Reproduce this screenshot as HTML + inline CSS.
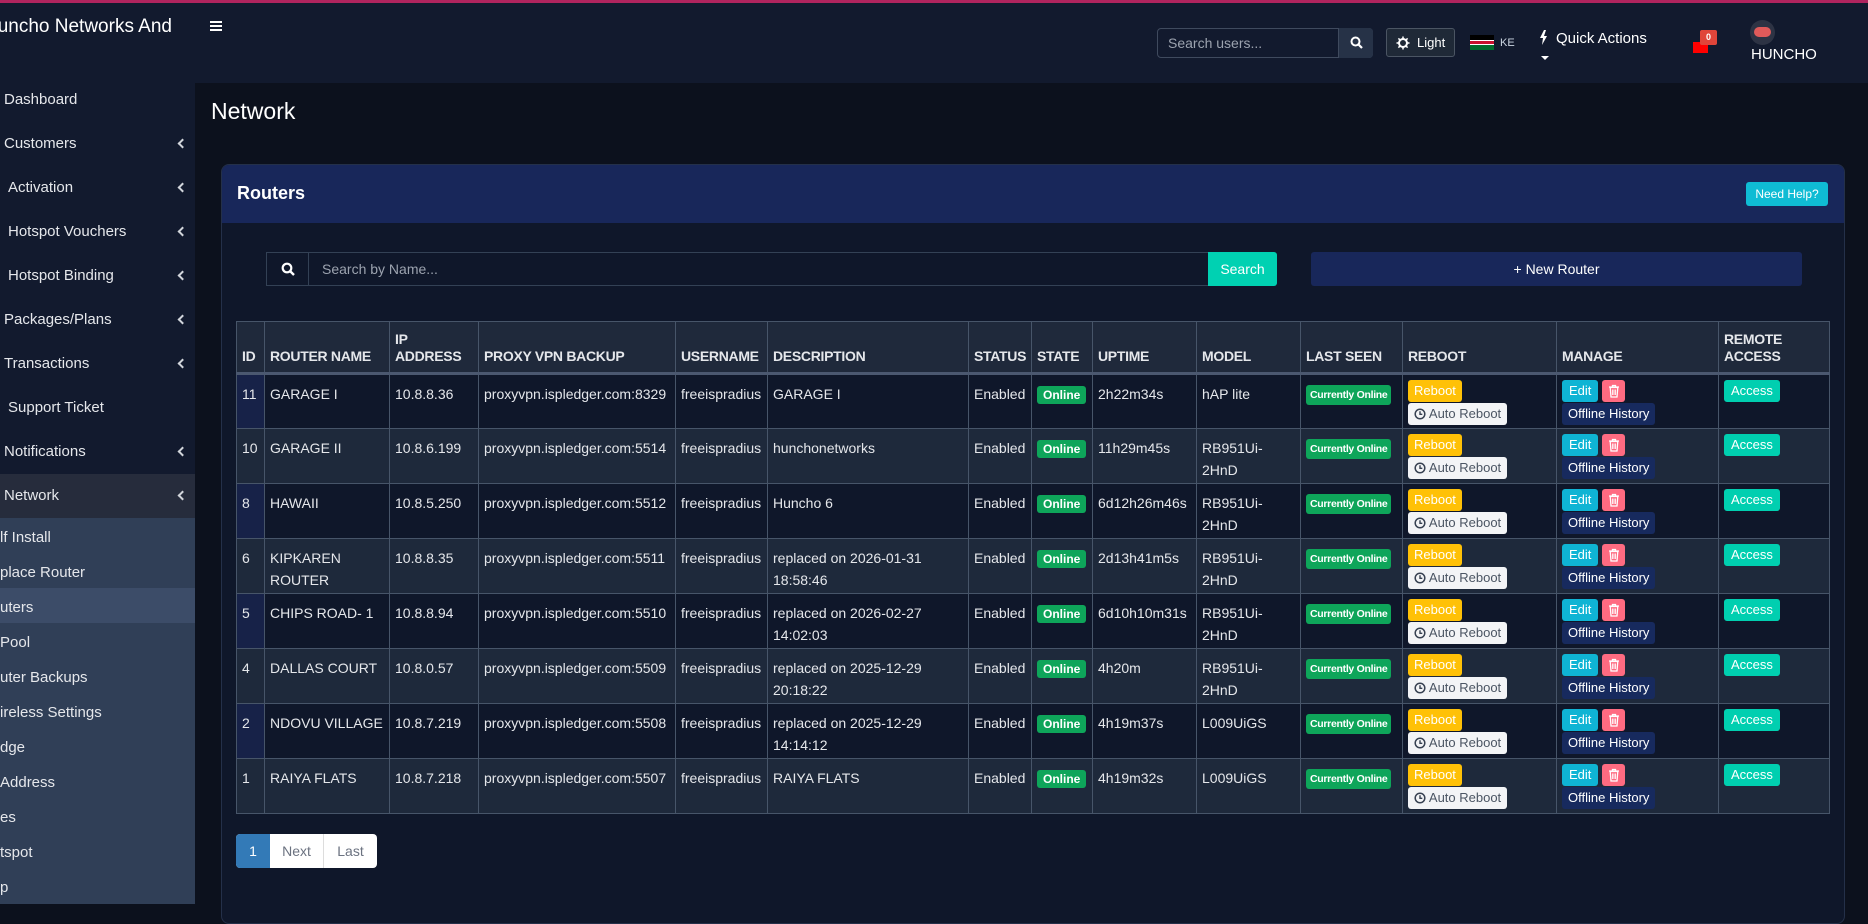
<!DOCTYPE html>
<html><head><meta charset="utf-8"><style>
*{box-sizing:border-box;margin:0;padding:0}
body{width:1868px;height:904px;overflow:hidden;background:#0c111d;font-family:"Liberation Sans",sans-serif;color:#e5e7eb;position:relative}
.abs{position:absolute}
#top{left:0;top:0;width:1868px;height:3px;background:#b0245e}
#hdr{left:0;top:3px;width:1868px;height:80px;background:#121a2e}
#side{left:0;top:83px;width:195px;height:821px;background:#121a2e}
.si{position:absolute;left:4px;font-size:15px;color:#e5e7eb}
.chev{position:absolute;left:179px;width:7px;height:7px;border-left:2px solid #d1d5db;border-bottom:2px solid #d1d5db;transform:rotate(45deg)}
.sub{position:absolute;left:0;font-size:15px;color:#e5e7eb}
#card{left:221px;top:164px;width:1624px;height:760px;background:#0f172a;border:1px solid #243049;border-radius:8px;overflow:hidden}
#ch{left:0;top:0;width:100%;height:58px;background:#18275a}
table{position:absolute;left:236px;top:321px;border-collapse:collapse;table-layout:fixed;width:1593px}
th,td{border:1px solid #475569;text-align:left;vertical-align:top;padding:8px 5px 0 5px;font-size:14px;line-height:22px;color:#e5e7eb;white-space:nowrap;overflow:hidden}
th{vertical-align:bottom;font-size:14px;font-weight:bold;padding:0 5px 7px 5px;line-height:17px;background:#1f293b;height:52px;border-bottom:3px solid #4b5870;letter-spacing:-0.3px}
tbody tr{height:55px}
tbody tr:nth-child(odd) td{background:#0f172a}
tbody tr:nth-child(even) td{background:#1e293b}
tbody tr:nth-child(odd) td:first-child{background:#172248}
.b{display:inline-block;border-radius:3px;font-size:12px;line-height:18px;padding:0 6px;color:#fff;white-space:nowrap;vertical-align:top}
.on{background:#0ea55a;font-weight:bold;font-size:12px;margin-top:3px}
.co{background:#0ea55a;font-weight:bold;font-size:10.5px;line-height:20px;padding:0 4px;margin-top:2px;letter-spacing:-0.3px}
.rb{background:#ffc107;color:#fff;font-size:13px;line-height:22px;padding:0 6px}
.ar{background:#f3f4f6;color:#4b5563;font-size:13px;line-height:22px;padding:0 6px;margin-top:1px}
.ed{background:#0fb4d4;font-size:13px;line-height:22px;padding:0 7px}
.dl{background:#ff6b81;width:23px;height:22px;position:relative}
.oh{background:#172a5e;font-size:13px;line-height:22px;padding:0 6px;margin-top:1px}
.ac{background:#00cfb0;font-size:13px;line-height:22px;padding:0 7px}
td.act{padding-top:5px;line-height:0}
</style></head><body>
<div id="top" class="abs"></div>
<div id="hdr" class="abs">
 <div class="abs" style="left:-16px;top:13px;font-size:19px;color:#fff">Huncho Networks And</div>
 <div class="abs" style="left:210px;top:18px;width:12px">
  <div style="height:2px;background:#fff;margin-bottom:2px"></div><div style="height:2px;background:#fff;margin-bottom:2px"></div><div style="height:2px;background:#fff"></div></div>
 <div class="abs" style="left:1157px;top:25px;width:216px;height:30px;border:1px solid #3f4a5e;border-radius:4px;background:#121a2e">
  <div class="abs" style="left:10px;top:6px;font-size:14px;color:#9ca3af">Search users...</div>
  <div class="abs" style="left:180px;top:-1px;width:35px;height:30px;background:#263247;border-left:1px solid #3f4a5e;border-radius:0 4px 4px 0">
   <svg class="abs" style="left:11px;top:8px" width="13" height="13" viewBox="0 0 13 13"><circle cx="5.5" cy="5.5" r="4" fill="none" stroke="#fff" stroke-width="2"/><path d="M8.5 8.5L12 12" stroke="#fff" stroke-width="2.2"/></svg></div>
 </div>
 <div class="abs" style="left:1386px;top:25px;width:69px;height:29px;border:1px solid #4b5563;border-radius:3px;background:#1f2937">
  <svg class="abs" style="left:9px;top:7px" width="14" height="14" viewBox="0 0 14 14"><circle cx="7" cy="7" r="4" fill="none" stroke="#fff" stroke-width="2"/><g stroke="#fff" stroke-width="1.5"><path d="M7 0.5V2.5M7 11.5V13.5M0.5 7H2.5M11.5 7H13.5M2.4 2.4L3.8 3.8M10.2 10.2L11.6 11.6M2.4 11.6L3.8 10.2M10.2 3.8L11.6 2.4"/></g></svg>
  <div class="abs" style="left:30px;top:6px;font-size:13px;color:#fff">Light</div></div>
 <div class="abs" style="left:1470px;top:32px;width:24px;height:15px">
  <div style="height:5px;background:#000"></div><div style="height:5px;background:#c8102e;border-top:1px solid #fff;border-bottom:1px solid #fff"></div><div style="height:5px;background:#006b2d"></div></div>
 <div class="abs" style="left:1500px;top:34px;font-size:11px;color:#cbd5e1">KE</div>
 <svg class="abs" style="left:1539px;top:27px" width="9" height="15" viewBox="0 0 9 15"><path d="M5 0L1 8H4L3 15L8 6H5L7 0Z" fill="#fff"/></svg>
 <div class="abs" style="left:1556px;top:27px;font-size:15px;color:#fff">Quick Actions</div>
 <div class="abs" style="left:1541px;top:53px;width:0;height:0;border-left:4px solid transparent;border-right:4px solid transparent;border-top:4px solid #fff"></div>
 <div class="abs" style="left:1693px;top:39px;width:15px;height:11px;background:#ff0000"></div>
 <div class="abs" style="left:1700px;top:27px;width:17px;height:15px;background:#e0453a;border-radius:2px;font-size:9px;color:#fff;text-align:center;line-height:15px;font-weight:bold">0</div>
 <div class="abs" style="left:1750px;top:17px;width:25px;height:25px;border-radius:50%;background:#2d3344"><div style="position:absolute;left:4px;top:7px;width:17px;height:10px;border-radius:5px;background:#e05a5a"></div></div>
 <div class="abs" style="left:1751px;top:43px;font-size:15px;color:#fff">HUNCHO</div>
</div>
<div id="side" class="abs">
 <div class="si" style="top:8px">Dashboard</div>
 <div class="si" style="top:52px">Customers</div><div class="chev" style="top:57px"></div>
 <div class="si" style="top:96px;left:8px">Activation</div><div class="chev" style="top:101px"></div>
 <div class="si" style="top:140px;left:8px">Hotspot Vouchers</div><div class="chev" style="top:145px"></div>
 <div class="si" style="top:184px;left:8px">Hotspot Binding</div><div class="chev" style="top:189px"></div>
 <div class="si" style="top:228px">Packages/Plans</div><div class="chev" style="top:233px"></div>
 <div class="si" style="top:272px">Transactions</div><div class="chev" style="top:277px"></div>
 <div class="si" style="top:316px;left:8px">Support Ticket</div>
 <div class="si" style="top:360px">Notifications</div><div class="chev" style="top:365px"></div>
 <div class="abs" style="left:0;top:391px;width:195px;height:44px;background:#262c3c"></div>
 <div class="si" style="top:404px">Network</div><div class="chev" style="top:409px"></div>
 <div class="abs" style="left:0;top:435px;width:195px;height:386px;background:#303f57"></div>
 <div class="abs" style="left:0;top:505px;width:195px;height:35px;background:#3c4c68"></div>
 <div class="sub" style="top:446px">lf Install</div>
 <div class="sub" style="top:481px">place Router</div>
 <div class="sub" style="top:516px">uters</div>
 <div class="sub" style="top:551px">Pool</div>
 <div class="sub" style="top:586px">uter Backups</div>
 <div class="sub" style="top:621px">ireless Settings</div>
 <div class="sub" style="top:656px">dge</div>
 <div class="sub" style="top:691px">Address</div>
 <div class="sub" style="top:726px">es</div>
 <div class="sub" style="top:761px">tspot</div>
 <div class="sub" style="top:796px">p</div>
</div>
<div class="abs" style="left:211px;top:98px;font-size:23px;color:#fff">Network</div>
<div id="card" class="abs">
 <div id="ch" class="abs">
  <div class="abs" style="left:15px;top:18px;font-size:18px;font-weight:bold;color:#fff">Routers</div>
  <div class="abs" style="left:1524px;top:17px;width:82px;height:24px;background:#0fbcd4;border-radius:3px;font-size:12px;color:#fff;text-align:center;line-height:24px">Need Help?</div>
 </div>
 <div class="abs" style="left:44px;top:87px;width:953px;height:34px;border:1px solid #334155;background:#0f172a">
  <div class="abs" style="left:0;top:0;width:42px;height:32px;border-right:1px solid #334155">
   <svg class="abs" style="left:14px;top:9px" width="14" height="14" viewBox="0 0 14 14"><circle cx="6" cy="6" r="4.3" fill="none" stroke="#fff" stroke-width="2.2"/><path d="M9 9L13 13" stroke="#fff" stroke-width="2.4"/></svg></div>
  <div class="abs" style="left:55px;top:8px;font-size:14px;color:#9ca3af">Search by Name...</div>
 </div>
 <div class="abs" style="left:986px;top:87px;width:69px;height:34px;background:#00d1b2;border-radius:0 3px 3px 0;color:#fff;font-size:14px;text-align:center;line-height:34px">Search</div>
 <div class="abs" style="left:1089px;top:87px;width:491px;height:34px;background:#18275a;border-radius:3px;color:#fff;font-size:14px;text-align:center;line-height:34px">+ New Router</div>
</div>
<svg width="0" height="0" style="position:absolute"><defs>
<symbol id="clk" viewBox="0 0 12 12"><circle cx="6" cy="6" r="4.8" fill="none" stroke="#374151" stroke-width="1.5"/><path d="M6 3.2V6.3H8.3" fill="none" stroke="#374151" stroke-width="1.4"/></symbol>
<symbol id="trs" viewBox="0 0 12 14"><path d="M1 3H11M4.5 3V1.5H7.5V3M2.2 3.5L3 13H9L9.8 3.5Z" fill="none" stroke="#fff" stroke-width="1.3"/><path d="M4.6 5.5V11M6 5.5V11M7.4 5.5V11" stroke="#fff" stroke-width="0.9"/></symbol>
</defs></svg>
<table>
<colgroup><col style="width:28px"><col style="width:125px"><col style="width:89px"><col style="width:197px"><col style="width:92px"><col style="width:201px"><col style="width:63px"><col style="width:61px"><col style="width:104px"><col style="width:104px"><col style="width:102px"><col style="width:154px"><col style="width:162px"><col style="width:111px"></colgroup>
<thead><tr><th>ID</th><th>ROUTER NAME</th><th>IP<br>ADDRESS</th><th>PROXY VPN BACKUP</th><th>USERNAME</th><th>DESCRIPTION</th><th>STATUS</th><th>STATE</th><th>UPTIME</th><th>MODEL</th><th>LAST SEEN</th><th>REBOOT</th><th>MANAGE</th><th>REMOTE<br>ACCESS</th></tr></thead>
<tbody>
<tr><td>11</td><td>GARAGE I</td><td>10.8.8.36</td><td>proxyvpn.ispledger.com:8329</td><td>freeispradius</td><td>GARAGE I</td><td>Enabled</td><td><span class="b on">Online</span></td><td>2h22m34s</td><td>hAP lite</td><td><span class="b co">Currently Online</span></td><td class="act"><span class="b rb">Reboot</span><br><span class="b ar"><svg width="12" height="12" style="vertical-align:-2px"><use href="#clk"/></svg> Auto Reboot</span></td><td class="act"><span class="b ed">Edit</span> <span class="b dl"><svg width="12" height="14" style="position:absolute;left:6px;top:4px"><use href="#trs"/></svg></span><br><span class="b oh">Offline History</span></td><td class="act"><span class="b ac">Access</span></td></tr>
<tr><td>10</td><td>GARAGE II</td><td>10.8.6.199</td><td>proxyvpn.ispledger.com:5514</td><td>freeispradius</td><td>hunchonetworks</td><td>Enabled</td><td><span class="b on">Online</span></td><td>11h29m45s</td><td>RB951Ui-<br>2HnD</td><td><span class="b co">Currently Online</span></td><td class="act"><span class="b rb">Reboot</span><br><span class="b ar"><svg width="12" height="12" style="vertical-align:-2px"><use href="#clk"/></svg> Auto Reboot</span></td><td class="act"><span class="b ed">Edit</span> <span class="b dl"><svg width="12" height="14" style="position:absolute;left:6px;top:4px"><use href="#trs"/></svg></span><br><span class="b oh">Offline History</span></td><td class="act"><span class="b ac">Access</span></td></tr>
<tr><td>8</td><td>HAWAII</td><td>10.8.5.250</td><td>proxyvpn.ispledger.com:5512</td><td>freeispradius</td><td>Huncho 6</td><td>Enabled</td><td><span class="b on">Online</span></td><td>6d12h26m46s</td><td>RB951Ui-<br>2HnD</td><td><span class="b co">Currently Online</span></td><td class="act"><span class="b rb">Reboot</span><br><span class="b ar"><svg width="12" height="12" style="vertical-align:-2px"><use href="#clk"/></svg> Auto Reboot</span></td><td class="act"><span class="b ed">Edit</span> <span class="b dl"><svg width="12" height="14" style="position:absolute;left:6px;top:4px"><use href="#trs"/></svg></span><br><span class="b oh">Offline History</span></td><td class="act"><span class="b ac">Access</span></td></tr>
<tr><td>6</td><td>KIPKAREN<br>ROUTER</td><td>10.8.8.35</td><td>proxyvpn.ispledger.com:5511</td><td>freeispradius</td><td>replaced on 2026-01-31<br>18:58:46</td><td>Enabled</td><td><span class="b on">Online</span></td><td>2d13h41m5s</td><td>RB951Ui-<br>2HnD</td><td><span class="b co">Currently Online</span></td><td class="act"><span class="b rb">Reboot</span><br><span class="b ar"><svg width="12" height="12" style="vertical-align:-2px"><use href="#clk"/></svg> Auto Reboot</span></td><td class="act"><span class="b ed">Edit</span> <span class="b dl"><svg width="12" height="14" style="position:absolute;left:6px;top:4px"><use href="#trs"/></svg></span><br><span class="b oh">Offline History</span></td><td class="act"><span class="b ac">Access</span></td></tr>
<tr><td>5</td><td>CHIPS ROAD- 1</td><td>10.8.8.94</td><td>proxyvpn.ispledger.com:5510</td><td>freeispradius</td><td>replaced on 2026-02-27<br>14:02:03</td><td>Enabled</td><td><span class="b on">Online</span></td><td>6d10h10m31s</td><td>RB951Ui-<br>2HnD</td><td><span class="b co">Currently Online</span></td><td class="act"><span class="b rb">Reboot</span><br><span class="b ar"><svg width="12" height="12" style="vertical-align:-2px"><use href="#clk"/></svg> Auto Reboot</span></td><td class="act"><span class="b ed">Edit</span> <span class="b dl"><svg width="12" height="14" style="position:absolute;left:6px;top:4px"><use href="#trs"/></svg></span><br><span class="b oh">Offline History</span></td><td class="act"><span class="b ac">Access</span></td></tr>
<tr><td>4</td><td>DALLAS COURT</td><td>10.8.0.57</td><td>proxyvpn.ispledger.com:5509</td><td>freeispradius</td><td>replaced on 2025-12-29<br>20:18:22</td><td>Enabled</td><td><span class="b on">Online</span></td><td>4h20m</td><td>RB951Ui-<br>2HnD</td><td><span class="b co">Currently Online</span></td><td class="act"><span class="b rb">Reboot</span><br><span class="b ar"><svg width="12" height="12" style="vertical-align:-2px"><use href="#clk"/></svg> Auto Reboot</span></td><td class="act"><span class="b ed">Edit</span> <span class="b dl"><svg width="12" height="14" style="position:absolute;left:6px;top:4px"><use href="#trs"/></svg></span><br><span class="b oh">Offline History</span></td><td class="act"><span class="b ac">Access</span></td></tr>
<tr><td>2</td><td>NDOVU VILLAGE</td><td>10.8.7.219</td><td>proxyvpn.ispledger.com:5508</td><td>freeispradius</td><td>replaced on 2025-12-29<br>14:14:12</td><td>Enabled</td><td><span class="b on">Online</span></td><td>4h19m37s</td><td>L009UiGS</td><td><span class="b co">Currently Online</span></td><td class="act"><span class="b rb">Reboot</span><br><span class="b ar"><svg width="12" height="12" style="vertical-align:-2px"><use href="#clk"/></svg> Auto Reboot</span></td><td class="act"><span class="b ed">Edit</span> <span class="b dl"><svg width="12" height="14" style="position:absolute;left:6px;top:4px"><use href="#trs"/></svg></span><br><span class="b oh">Offline History</span></td><td class="act"><span class="b ac">Access</span></td></tr>
<tr><td>1</td><td>RAIYA FLATS</td><td>10.8.7.218</td><td>proxyvpn.ispledger.com:5507</td><td>freeispradius</td><td>RAIYA FLATS</td><td>Enabled</td><td><span class="b on">Online</span></td><td>4h19m32s</td><td>L009UiGS</td><td><span class="b co">Currently Online</span></td><td class="act"><span class="b rb">Reboot</span><br><span class="b ar"><svg width="12" height="12" style="vertical-align:-2px"><use href="#clk"/></svg> Auto Reboot</span></td><td class="act"><span class="b ed">Edit</span> <span class="b dl"><svg width="12" height="14" style="position:absolute;left:6px;top:4px"><use href="#trs"/></svg></span><br><span class="b oh">Offline History</span></td><td class="act"><span class="b ac">Access</span></td></tr>
</tbody></table>
<div class="abs" style="left:236px;top:834px;width:141px;height:34px;border-radius:4px;overflow:hidden;background:#fff;font-size:14px;line-height:34px">
 <div class="abs" style="left:0;top:0;width:34px;height:34px;background:#337ab7;color:#fff;text-align:center">1</div>
 <div class="abs" style="left:34px;top:0;width:54px;height:34px;color:#6b7280;text-align:center;border-right:1px solid #ddd">Next</div>
 <div class="abs" style="left:88px;top:0;width:53px;height:34px;color:#6b7280;text-align:center">Last</div>
</div>
</body></html>
